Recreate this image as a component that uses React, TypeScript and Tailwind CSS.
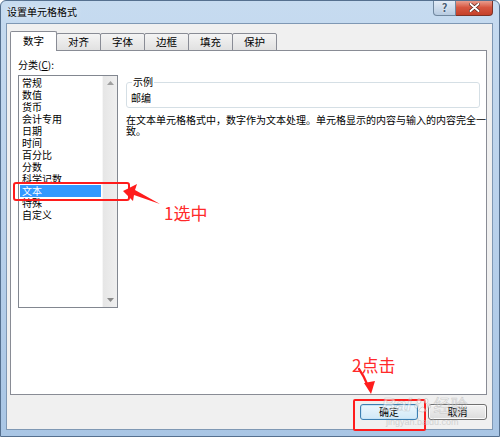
import React from "react";

const categories = [
  "常规",
  "数值",
  "货币",
  "会计专用",
  "日期",
  "时间",
  "百分比",
  "分数",
  "科学记数",
  "文本",
  "特殊",
  "自定义",
];

const tabs = ["数字", "对齐", "字体", "边框", "填充", "保护"];

function TitleButtons() {
  return (
    <div className="flex -mt-px">
      <div className="w-[23px] h-[16px] flex items-center justify-center rounded-bl-[4px] border border-t-0 border-[#70879f] bg-gradient-to-b from-[#e6eef8] to-[#b7cbe1] text-[11px] leading-none font-bold text-[#4a5d75] [text-shadow:0_0_2px_#ffffff]">
        ?
      </div>
      <div className="w-[37px] h-[16px] flex items-center justify-center rounded-br-[4px] border border-t-0 border-l-0 border-[#7d3226] bg-gradient-to-b from-[#eaa698] via-[#d65640] to-[#c5412a]">
        <svg width="11" height="9" viewBox="0 0 11 9">
          <path d="M1.5 1 L9.5 8 M9.5 1 L1.5 8" stroke="#4a1a12" strokeWidth="3.2" strokeLinecap="round" />
          <path d="M1.5 1 L9.5 8 M9.5 1 L1.5 8" stroke="#ffffff" strokeWidth="2" strokeLinecap="round" />
        </svg>
      </div>
    </div>
  );
}

function TabStrip() {
  return (
    <div className="relative z-10 -mb-px flex items-end h-[20px]">
      {tabs.map((t, i) =>
        i === 0 ? (
          <div
            key={t}
            className="w-[47px] h-[20px] bg-white border border-b-0 border-[#898c95] rounded-t-[2px] flex items-center justify-center text-[10.5px] leading-[12px] pb-[2px]"
          >
            {t}
          </div>
        ) : (
          <div
            key={t}
            className="-ml-px w-[45px] h-[18px] border border-[#898c95] rounded-t-[2px] bg-gradient-to-b from-[#f4f4f4] to-[#e1e1e1] flex items-center justify-center text-[10.5px] leading-[12px]"
          >
            {t}
          </div>
        )
      )}
    </div>
  );
}

function ListBox() {
  return (
    <div className="w-[100px] h-[233px] border border-[#828790] bg-white flex">
      <div className="flex-1 pt-[1px] px-[1px] flex flex-col">
        {categories.map((c) => (
          <div
            key={c}
            className={`h-[12px] leading-[12px] pl-[2px] text-[10px] ${
              c === "文本" ? "bg-[#3399ff] text-white" : "text-black"
            }`}
          >
            {c}
          </div>
        ))}
      </div>
      <div className="w-[15px] bg-gradient-to-r from-[#e6e6e6] to-[#efefef] border-l border-[#f6f6f6] flex flex-col items-center justify-between py-[5px]">
        <svg width="7" height="4" viewBox="0 0 7 4">
          <path d="M0 4 L3.5 0 L7 4 Z" fill="#a0a0a0" />
        </svg>
        <svg width="7" height="4" viewBox="0 0 7 4">
          <path d="M0 0 L7 0 L3.5 4 Z" fill="#8a8a8a" />
        </svg>
      </div>
    </div>
  );
}

function SamplePane() {
  return (
    <div className="flex-1 flex flex-col mt-[1px]">
      <fieldset className="border border-[#d5dfe5] rounded-[3px] pl-[3px] pb-[3px] min-w-0">
        <legend className="ml-[2px] px-[1px] text-[10px] leading-[12px]">示例</legend>
        <div className="text-[10px] leading-[12px] pt-[4px] pl-[1px]">邮编</div>
      </fieldset>
      <p className="mt-[6px] -mr-[6px] text-[10px] leading-[11px] text-black">
        在文本单元格格式中，数字作为文本处理。单元格显示的内容与输入的内容完全一致。
      </p>
    </div>
  );
}

function Annotations() {
  return (
    <div className="absolute -inset-px pointer-events-none">
      <svg width="500" height="437" viewBox="0 0 500 437" className="absolute left-0 top-0">
        <rect x="14" y="183" width="115" height="17" rx="2" fill="none" stroke="#ff1c1c" strokeWidth="2" />
        <polygon points="123,191 137,184 135,190 160,204 134,195 133,201" fill="#ff1c1c" />
        <path d="M359 369 Q364 376 368 386" fill="none" stroke="#ff1c1c" strokeWidth="2.2" strokeLinecap="round" />
        <polygon points="371,394 364,383 375,381" fill="#ff1c1c" />
        <rect x="354" y="400" width="71" height="30" rx="1" fill="none" stroke="#ff1c1c" strokeWidth="2" />
      </svg>
      <div className="absolute left-[164px] top-[201px] text-[17px] leading-[24px] text-[#ff2a2a] font-['Noto_Sans_CJK_SC',sans-serif]">
        1选中
      </div>
      <div className="absolute left-[352px] top-[353px] text-[17px] leading-[24px] text-[#ff2a2a] font-['Noto_Sans_CJK_SC',sans-serif]">
        2点击
      </div>
      <div className="absolute left-[382px] top-[394px] flex items-center gap-[2px] opacity-50">
        <span className="font-['Liberation_Sans',sans-serif] font-bold italic text-[19px] leading-[22px] text-white [-webkit-text-stroke:0.6px_#a9a9a9]">
          Bai
        </span>
        <svg width="18" height="18" viewBox="0 0 18 18">
          <g fill="#ffffff" stroke="#a9a9a9" strokeWidth="0.8">
            <ellipse cx="5" cy="5" rx="2" ry="2.6" />
            <ellipse cx="12" cy="5" rx="2" ry="2.6" />
            <ellipse cx="2.5" cy="10" rx="1.8" ry="2.2" />
            <ellipse cx="15" cy="10" rx="1.8" ry="2.2" />
            <path d="M4.5 15 Q8.5 7 12.5 15 Q8.5 17 4.5 15 Z" />
          </g>
        </svg>
        <span className="text-[17px] leading-[22px] text-white [-webkit-text-stroke:0.6px_#a9a9a9]">经验</span>
      </div>
      <div className="absolute left-[386px] top-[417px] text-[9px] leading-[10px] text-[#bcbcbc] opacity-60 font-['Liberation_Sans',sans-serif]">
        jingyan.baidu.com
      </div>
    </div>
  );
}

export default function App() {
  return (
    <div className="relative w-[500px] h-[437px] overflow-hidden border border-[#55708f] rounded-t-[6px] bg-gradient-to-b from-[#c6dbf0] via-[#b9d1eb] to-[#a9c6e5] flex flex-col font-['Noto_Sans_CJK_SC',sans-serif] text-black">
      {/* caption bar */}
      <div className="h-[22px] flex items-start justify-between pr-[6px]">
        <span className="pl-[6px] mt-[5px] text-[10px] leading-[12px] text-black [text-shadow:0_0_6px_#ffffff]">
          设置单元格格式
        </span>
        <TitleButtons />
      </div>

      {/* client area */}
      <div className="flex-1 ml-[5px] mr-[6px] mb-[6px] bg-[#f0f0f0] border border-[#7f98b4] pl-[3px] pr-[5px] pt-[7px] flex flex-col">
        <TabStrip />
        <div className="h-[345px] bg-white border border-[#898c95] pl-[7px] pr-[6px] pt-[8px]">
          <div className="text-[10px] leading-[12px]">
            分类(<span className="underline">C</span>):
          </div>
          <div className="mt-[4px] flex items-start gap-[8px]">
            <ListBox />
            <SamplePane />
          </div>
        </div>
        <div className="mt-[9px] flex justify-end gap-[10px]">
          <div className="w-[58px] h-[16px] rounded-[3px] border border-[#3c7fb1] bg-gradient-to-b from-[#eaf6fd] to-[#d1e9f7] flex items-center justify-center text-[10px] leading-[12px] shadow-[inset_0_0_0_1px_#c6e4f7]">
            确定
          </div>
          <div className="w-[59px] h-[16px] rounded-[3px] border border-[#707070] bg-gradient-to-b from-[#f2f2f2] to-[#dcdcdc] flex items-center justify-center text-[10px] leading-[12px] shadow-[inset_0_0_0_1px_#fbfbfb]">
            取消
          </div>
        </div>
      </div>

      <Annotations />
    </div>
  );
}
